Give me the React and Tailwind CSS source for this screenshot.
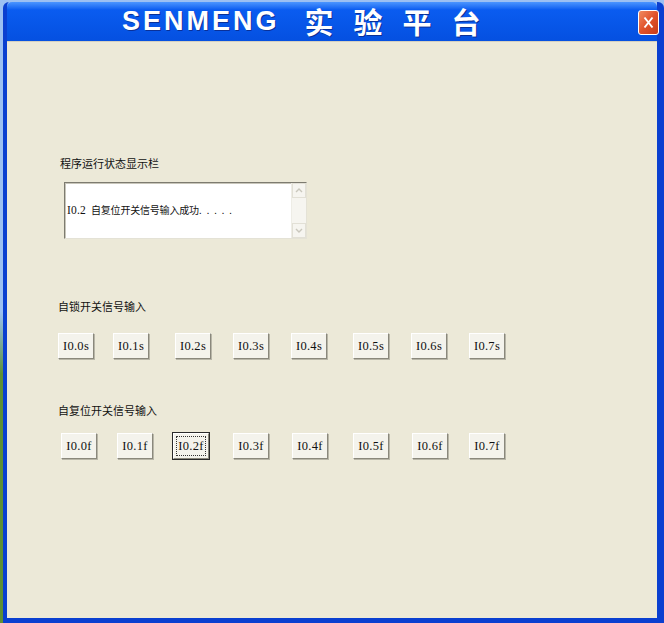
import React from "react";

const lockButtons = [
  { label: "I0.0s", cls: "ml-0" },
  { label: "I0.1s", cls: "ml-[19px]" },
  { label: "I0.2s", cls: "ml-[26px]" },
  { label: "I0.3s", cls: "ml-[22px]" },
  { label: "I0.4s", cls: "ml-[22px]" },
  { label: "I0.5s", cls: "ml-[26px]" },
  { label: "I0.6s", cls: "ml-[22px]" },
  { label: "I0.7s", cls: "ml-[22px]" },
];

const resetButtons = [
  { label: "I0.0f", cls: "ml-0" },
  { label: "I0.1f", cls: "ml-[20px]" },
  { label: "I0.2f", cls: "ml-[20px]", focused: true },
  { label: "I0.3f", cls: "ml-[24px]" },
  { label: "I0.4f", cls: "ml-[23px]" },
  { label: "I0.5f", cls: "ml-[25px]" },
  { label: "I0.6f", cls: "ml-[23px]" },
  { label: "I0.7f", cls: "ml-[21px]" },
];

function XpButton({ label, cls, focused }) {
  return (
    <div
      className={
        "relative h-[26px] w-[36px] shrink-0 flex items-center justify-center bg-[#f4f3ec] border border-t-[#ffffff] border-l-[#ffffff] border-r-[#8a887c] border-b-[#8a887c] shadow-[1px_1px_0_#b8b6a8] " +
        (focused ? "outline outline-1 outline-[#2a2a2a] " : "") +
        cls
      }
    >
      {focused && (
        <div className="absolute inset-[2px] border border-dotted border-[#333]" />
      )}
      <span className="font-['Liberation_Serif',serif] text-[12.5px] tracking-[0.3px] text-[#111] leading-none">
        {label}
      </span>
    </div>
  );
}

function Chevron({ up }) {
  return (
    <svg width="8" height="5" viewBox="0 0 8 5">
      <path
        d={up ? "M1 4 L4 1 L7 4" : "M1 1 L4 4 L7 1"}
        stroke="#c9c7bc"
        strokeWidth="1.4"
        fill="none"
      />
    </svg>
  );
}

const cjk = "font-['Noto_Sans_CJK_SC','Noto_Sans',sans-serif]";

export default function App() {
  return (
    <div className="w-[664px] h-[623px] overflow-hidden bg-gradient-to-b from-[#9cc0f2] from-50% to-[#5f8f34] to-60% pt-[2px] pl-[3px]">
      <div className="w-[661px] h-[621px] flex flex-col border-l-[4px] border-r-[7px] border-b-[5px] border-[#0a3fd0] rounded-t-[6px]">
        {/* title bar */}
        <div className="h-[39px] shrink-0 relative flex items-center rounded-t-[5px] bg-gradient-to-b from-[#4a95ff] via-[#0a5cf0] via-20% to-[#0550e0] pl-[115px]">
          <span className="font-['Liberation_Sans',sans-serif] font-bold text-[27px] tracking-[3px] text-white leading-none [text-shadow:1px_1px_0_#0a3098]">
            SENMENG
          </span>
          <span
            className={
              cjk +
              " ml-[25px] font-bold text-[29px] tracking-[20px] text-white leading-none [text-shadow:1px_1px_0_#0a3098]"
            }
          >
            实验平台
          </span>
          <div className="absolute right-[-2px] top-[8px] w-[21px] h-[25px] rounded-[3px] border border-white bg-gradient-to-br from-[#f08a60] via-[#e0522a] to-[#c83c18] flex items-center justify-center">
            <svg width="11" height="13" viewBox="0 0 11 13">
              <path d="M1.5 1.5 L9.5 11.5 M9.5 1.5 L1.5 11.5" stroke="white" strokeWidth="2" />
            </svg>
          </div>
        </div>

        {/* client area */}
        <div className="flex-1 bg-[#ece9d8] flex flex-col pl-[51px] border-t border-[#d4d0c0]">
          <div className={cjk + " mt-[114px] ml-[2px] text-[11px] leading-[14px] text-[#111]"}>
            程序运行状态显示栏
          </div>

          <div className="mt-[12px] ml-[6px] w-[243px] h-[57px] flex bg-white border border-t-[#7d7b70] border-l-[#7d7b70] border-r-[#e4e2d6] border-b-[#e4e2d6] shadow-[inset_1px_1px_0_#c8c6ba]">
            <div className="flex-1 flex items-center pl-[2px] pt-[1px]">
              <div className="flex items-baseline">
                <span className="font-['Liberation_Serif',serif] text-[11.5px] text-[#111] tracking-[0.2px]">
                  I0.2
                </span>
                <span className={cjk + " ml-[5px] text-[10px] tracking-[-0.2px] text-[#111]"}>
                  自复位开关信号输入成功
                </span>
                <span className="font-['Liberation_Sans',sans-serif] text-[11px] tracking-[4.5px] text-[#111]">
                  .....
                </span>
              </div>
            </div>
            <div className="w-[15px] flex flex-col bg-[#f6f5f0] border-l border-[#eeede6]">
              <div className="h-[15px] flex items-center justify-center border border-[#e2e0d6]">
                <Chevron up />
              </div>
              <div className="flex-1" />
              <div className="h-[15px] flex items-center justify-center border border-[#e2e0d6]">
                <Chevron />
              </div>
            </div>
          </div>

          <div className={cjk + " mt-[60px] text-[11px] leading-[14px] text-[#111]"}>
            自锁开关信号输入
          </div>
          <div className="mt-[20px] flex">
            {lockButtons.map((b) => (
              <XpButton key={b.label} {...b} />
            ))}
          </div>

          <div className={cjk + " mt-[44px] text-[11px] leading-[14px] text-[#111]"}>
            自复位开关信号输入
          </div>
          <div className="mt-[16px] ml-[3px] flex">
            {resetButtons.map((b) => (
              <XpButton key={b.label} {...b} />
            ))}
          </div>
        </div>
      </div>
    </div>
  );
}
